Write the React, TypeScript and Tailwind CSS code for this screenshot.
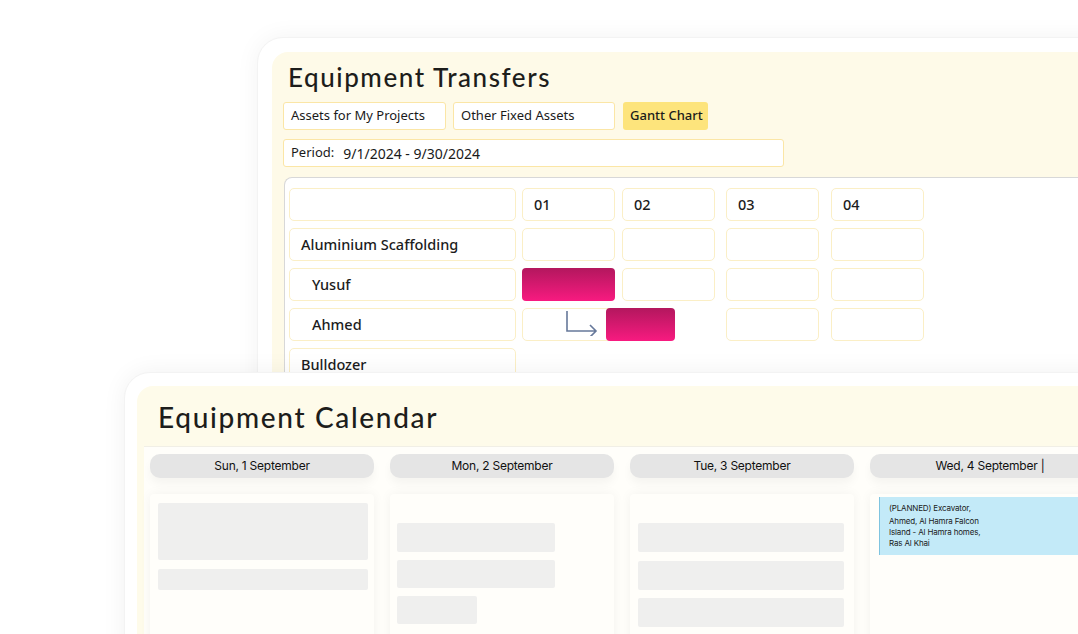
import React from 'react';

const cellBorder = 'border border-[#fbefc6] rounded-[5px] bg-white';
const titleFont = { fontFamily: 'Lato, "Noto Sans", sans-serif' };

const GanttCell: React.FC<{ w?: string; ml?: string; children?: React.ReactNode }> = ({ w = 'w-[93px]', ml = '', children }) => (
  <div className={`${cellBorder} ${w} ${ml} h-[33px] shrink-0 flex items-center px-[11px] text-[14.5px] font-medium text-[#1c1c1c]`}>
    {children}
  </div>
);

const PinkBar: React.FC<{ w: string; ml?: string }> = ({ w, ml = '' }) => (
  <div className={`${w} ${ml} h-[33px] shrink-0 rounded-[4px] bg-gradient-to-b from-[#b3175e] to-[#f81a80]`} />
);

const Label: React.FC<{ indent?: boolean; children?: React.ReactNode }> = ({ indent, children }) => (
  <div className={`${cellBorder} w-[227px] h-[33px] shrink-0 flex items-center ${indent ? 'pl-[22px]' : 'pl-[11px]'} text-[14.5px] font-medium text-[#1c1c1c]`}>
    {children}
  </div>
);

const Tab: React.FC<{ active?: boolean; w: string; children: React.ReactNode }> = ({ active, w, children }) => (
  <div
    className={`${w} h-[28px] flex items-center px-[7px] text-[13px] rounded-[3px] whitespace-nowrap ${
      active ? 'bg-[#fde47c] text-[#1a1a1a] font-medium' : 'bg-white border border-[#fbe6a6] text-[#1a1a1a]'
    }`}
  >
    {children}
  </div>
);

const Skeleton: React.FC<{ w: string; h: string; mt?: string }> = ({ w, h, mt = '' }) => (
  <div className={`${w} ${h} ${mt} bg-[#efefee] rounded-[2px]`} />
);

const DayHeader: React.FC<{ children: React.ReactNode; w?: string }> = ({ children, w = 'w-[224px]' }) => (
  <div className={`${w} h-[24px] shrink-0 rounded-[10px] bg-[#e5e5e5] flex items-center justify-center text-[12px] tracking-[-0.02em] text-[#111] shadow-[0_6px_10px_rgba(0,0,0,0.04)]`}>
    {children}
  </div>
);

const DayBody: React.FC<{ children?: React.ReactNode; w?: string }> = ({ children, w = 'w-[224px]' }) => (
  <div className={`${w} h-[160px] shrink-0 bg-[#fffefa] shadow-[0_0_12px_rgba(0,0,0,0.05)] rounded-t-[4px]`}>{children}</div>
);

const App: React.FC = () => {
  return (
    <div
      className="relative w-[1078px] h-[634px] overflow-hidden bg-white"
      style={{ fontFamily: '"Noto Sans", "Open Sans", sans-serif' }}
    >
      {/* Equipment Transfers window */}
      <div className="absolute left-[257px] top-[37px] w-[880px] h-[420px] rounded-[26px] bg-white border border-[#f3f3f3] shadow-[0_0_24px_rgba(0,0,0,0.05)] p-[14px]">
        <div className="h-full rounded-tl-[16px] bg-[#fefae8] pl-[11px] pt-[7px]">
          <h1 className="ml-[5px] text-[26px] leading-[36px] tracking-[0.06em] text-[#1d1d1b] font-medium" style={titleFont}>
            Equipment Transfers
          </h1>
          <div className="mt-[7px] flex gap-[7px]">
            <Tab w="w-[163px]">Assets for My Projects</Tab>
            <Tab w="w-[162px]">Other Fixed Assets</Tab>
            <div className="ml-[1px]">
              <Tab active w="w-[85px]">Gantt Chart</Tab>
            </div>
          </div>
          <div className="mt-[9px] w-[501px] h-[28px] flex items-center px-[7px] text-[13px] text-[#1a1a1a] bg-white border border-[#fbe6a6] rounded-[3px]">
            <span>Period:</span>
            <span className="ml-[9px] text-[14px]">9/1/2024 - 9/30/2024</span>
          </div>
          <div className="mt-[10px] ml-[1px] h-[300px] bg-white border-l border-t border-[#d8d8d8] rounded-tl-[8px] pl-[4px] pt-[10px] flex flex-col gap-[7px]">
            <div className="flex">
              <Label />
              <GanttCell ml="ml-[6px]">01</GanttCell>
              <GanttCell ml="ml-[7px]">02</GanttCell>
              <GanttCell ml="ml-[11px]">03</GanttCell>
              <GanttCell ml="ml-[12px]">04</GanttCell>
            </div>
            <div className="flex">
              <Label>Aluminium Scaffolding</Label>
              <GanttCell ml="ml-[6px]" />
              <GanttCell ml="ml-[7px]" />
              <GanttCell ml="ml-[11px]" />
              <GanttCell ml="ml-[12px]" />
            </div>
            <div className="flex">
              <Label indent>Yusuf</Label>
              <PinkBar w="w-[93px]" ml="ml-[6px]" />
              <GanttCell ml="ml-[7px]" />
              <GanttCell ml="ml-[11px]" />
              <GanttCell ml="ml-[12px]" />
            </div>
            <div className="flex">
              <Label indent>Ahmed</Label>
              <div className="relative ml-[6px] w-[153px] h-[33px] shrink-0 flex">
                <GanttCell w="w-[90px]" />
                <svg className="absolute left-[43px] top-[2px]" width="34" height="26" viewBox="0 0 34 26" fill="none">
                  <path d="M2 1 V21 H31 M25 15 L31 21 L25 27" stroke="#66789a" strokeWidth="1.6" />
                </svg>
                <PinkBar w="w-[69px]" ml="-ml-[6px]" />
              </div>
              <GanttCell ml="ml-[51px]" />
              <GanttCell ml="ml-[12px]" />
            </div>
            <div className="flex">
              <Label>Bulldozer</Label>
            </div>
          </div>
        </div>
      </div>

      {/* Equipment Calendar window */}
      <div className="absolute left-[124px] top-[372px] w-[1000px] h-[300px] rounded-[26px] bg-white border border-[#f3f3f3] shadow-[0_0_24px_rgba(0,0,0,0.06)] p-[12px] pt-[13px]">
        <div className="h-full rounded-tl-[16px] bg-[#fefbea] pl-[7px]">
          <h2 className="ml-[14px] pt-[13px] text-[28px] leading-[36px] tracking-[0.06em] text-[#1d1d1b] font-medium" style={titleFont}>
            Equipment Calendar
          </h2>
          <div className="mt-[11px] h-[200px] bg-[#fffefa] border-t border-[#f1efe6] pl-[6px] pt-[7px]">
            <div className="flex gap-[16px]" style={{ fontFamily: 'Inter, "Liberation Sans", sans-serif' }}>
              <DayHeader>Sun, 1 September</DayHeader>
              <DayHeader>Mon, 2 September</DayHeader>
              <DayHeader>Tue, 3 September</DayHeader>
              <DayHeader w="w-[240px]">Wed, 4 September |</DayHeader>
            </div>
            <div className="mt-[16px] flex gap-[16px]" style={{ fontFamily: 'Inter, "Liberation Sans", sans-serif' }}>
              <DayBody>
                <div className="pl-[8px] pr-[6px] pt-[9px]">
                  <Skeleton w="w-full" h="h-[57px]" />
                  <Skeleton w="w-full" h="h-[21px]" mt="mt-[9px]" />
                </div>
              </DayBody>
              <DayBody>
                <div className="pl-[7px] pt-[29px]">
                  <Skeleton w="w-[158px]" h="h-[29px]" />
                  <Skeleton w="w-[158px]" h="h-[28px]" mt="mt-[8px]" />
                  <Skeleton w="w-[80px]" h="h-[28px]" mt="mt-[8px]" />
                </div>
              </DayBody>
              <DayBody>
                <div className="pl-[8px] pr-[10px] pt-[29px]">
                  <Skeleton w="w-full" h="h-[29px]" />
                  <Skeleton w="w-full" h="h-[29px]" mt="mt-[9px]" />
                  <Skeleton w="w-full" h="h-[29px]" mt="mt-[8px]" />
                </div>
              </DayBody>
              <DayBody w="w-[240px]">
                <div className="pl-[9px] pt-[3px]">
                  <div className="h-[58px] bg-[#c3eaf8] border-l border-[#7fc4e0] pl-[9px] pt-[6px] text-[8px] leading-[11px] tracking-[-0.02em] text-[#1a1a1a]">
                    <div className="mb-[2px]">(PLANNED) Excavator,</div>
                    <div>Ahmed, Al Hamra Falcon</div>
                    <div>Island - Al Hamra homes,</div>
                    <div>Ras Al Khai</div>
                  </div>
                </div>
              </DayBody>
            </div>
          </div>
        </div>
      </div>
    </div>
  );
};

export default App;
